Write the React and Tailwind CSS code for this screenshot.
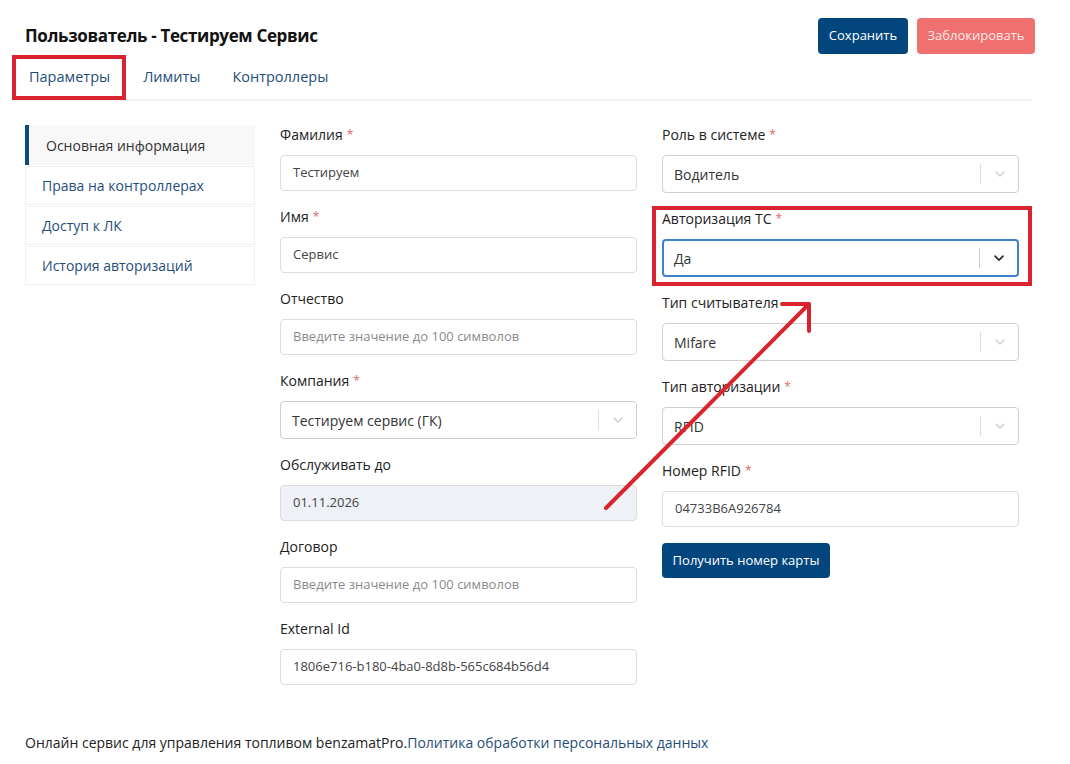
import React from "react";

const Star = () => <span className="text-[#e06666] ml-1 text-[12px] align-top">*</span>;

const Label = ({ children, required }) => (
  <div className="h-[20px] leading-[20px] text-[14px] text-[#222] mb-[10px]">
    {children}
    {required && <Star />}
  </div>
);

const Chevron = ({ dark }) => (
  <svg width="14" height="14" viewBox="0 0 20 20" className={dark ? "text-[#333]" : "text-[#ccc]"}>
    <path
      d="M4.5 7.5 L10 13 L15.5 7.5"
      fill="none"
      stroke="currentColor"
      strokeWidth={dark ? 2.6 : 2}
      strokeLinecap="round"
      strokeLinejoin="round"
    />
  </svg>
);

const Input = ({ value, placeholder, disabled }) => (
  <div
    className={
      "h-[36px] rounded-[4px] border border-[#dcdcdc] px-[12px] flex items-center text-[13px] " +
      (disabled ? "bg-[#eef1f5] text-[#444]" : "bg-white text-[#444]")
    }
  >
    {value ? value : <span className="text-[#8a8a8a]">{placeholder}</span>}
  </div>
);

const Select = ({ value, focused }) => (
  <div
    className={
      "h-[38px] rounded-[4px] flex items-center bg-white " +
      (focused ? "border-2 border-[#3d84cc] pl-[10px]" : "border border-[#cfcfcf] pl-[11px]")
    }
  >
    <div className="flex-1 text-[14px] text-[#333]">{value}</div>
    <div className={"w-px h-[20px] " + (focused ? "bg-[#ccc]" : "bg-[#ddd]")} />
    <div className="w-[37px] flex items-center justify-center">
      <Chevron dark={focused} />
    </div>
  </div>
);

const Field = ({ label, required, children, className = "" }) => (
  <div className={"mb-[16px] " + className}>
    <Label required={required}>{label}</Label>
    {children}
  </div>
);

export default function App() {
  const side = ["Права на контроллерах", "Доступ к ЛК", "История авторизаций"];

  return (
    <div className="relative w-[1070px] min-h-[764px] bg-white font-['Open_Sans',sans-serif] text-[#222]">
      {/* header */}
      <div className="flex items-center justify-between pt-[18px] pl-[25px] pr-[35px]">
        <h1 className="text-[17px] font-bold tracking-[-0.35px] text-[#111]">Пользователь - Тестируем Сервис</h1>
        <div className="flex gap-[9px]">
          <button className="h-[36px] w-[90px] rounded-[4px] bg-[#03467d] text-white text-[13px]">Сохранить</button>
          <button className="h-[36px] w-[118px] rounded-[4px] bg-[#f06f6f] text-[#fdeaea] text-[13px]">Заблокировать</button>
        </div>
      </div>

      {/* tabs */}
      <div className="mx-[12px] mr-[38px] mt-[1px] h-[46px] flex items-center border-b-2 border-[#f1f1f1] text-[14.5px] text-[#1f4e79]">
        <div className="px-[17px]">Параметры</div>
        <div className="px-[16px]">Лимиты</div>
        <div className="px-[16px]">Контроллеры</div>
      </div>

      {/* content */}
      <div className="flex gap-[25px] pl-[25px] pt-[24px]">
        <div className="w-[230px] flex flex-col gap-px">
          <div className="h-[40px] flex items-center bg-[#f8f8f8] border-l-4 border-[#0d4a7a] pl-[17px] text-[14px] text-[#333]">
            Основная информация
          </div>
          {side.map((s) => (
            <div
              key={s}
              className="h-[39px] flex items-center border border-[#f1f1f1] pl-[16px] text-[14px] text-[#1f4e79]"
            >
              {s}
            </div>
          ))}
        </div>

        <div className="w-[357px]">
          <Field label="Фамилия" required>
            <Input value="Тестируем" />
          </Field>
          <Field label="Имя" required>
            <Input value="Сервис" />
          </Field>
          <Field label="Отчество">
            <Input placeholder="Введите значение до 100 символов" />
          </Field>
          <Field label="Компания" required>
            <Select value="Тестируем сервис (ГК)" />
          </Field>
          <Field label="Обслуживать до">
            <Input value="01.11.2026" disabled />
          </Field>
          <Field label="Договор">
            <Input placeholder="Введите значение до 100 символов" />
          </Field>
          <Field label="External Id">
            <Input value="1806e716-b180-4ba0-8d8b-565c684b56d4" />
          </Field>
        </div>

        <div className="w-[357px]">
          <Field label="Роль в системе" required>
            <Select value="Водитель" />
          </Field>
          <Field label="Авторизация ТС" required>
            <Select value="Да" focused />
          </Field>
          <Field label="Тип считывателя">
            <Select value="Mifare" />
          </Field>
          <Field label="Тип авторизации" required>
            <Select value="RFID" />
          </Field>
          <Field label="Номер RFID" required>
            <Input value="04733B6A926784" />
          </Field>
          <button className="h-[35px] w-[168px] rounded-[4px] bg-[#03467d] text-white text-[13px]">
            Получить номер карты
          </button>
        </div>
      </div>

      {/* footer */}
      <div className="pl-[25px] mt-[31px] text-[14px] text-[#222]">
        Онлайн сервис для управления топливом benzamatPro.
        <span className="text-[#1f4e79]">Политика обработки персональных данных</span>
      </div>

      {/* annotations */}
      <div className="absolute left-[12px] top-[55px] w-[114px] h-[45px] border-4 border-[#d9232e]" />
      <div className="absolute left-[652px] top-[206px] w-[380px] h-[80px] border-4 border-[#d9232e]" />
      <svg className="absolute left-0 top-0 pointer-events-none" width="1070" height="764">
        <path
          d="M606 508 L809 304 M782 304 L809 304 L809 331"
          fill="none"
          stroke="#d9232e"
          strokeWidth="4"
          strokeLinecap="round"
          strokeLinejoin="round"
        />
      </svg>
    </div>
  );
}
